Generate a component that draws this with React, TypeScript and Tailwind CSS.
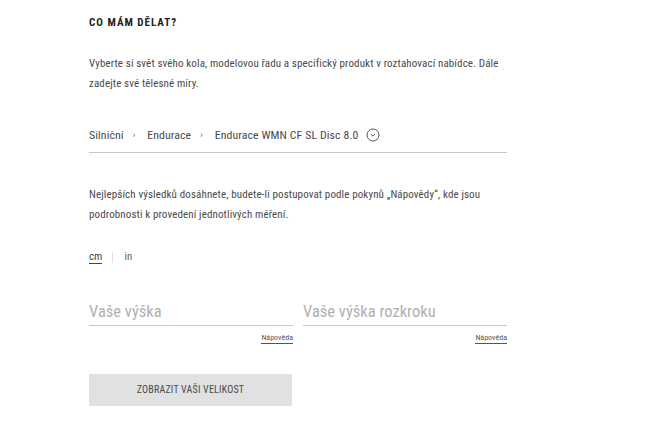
import React from "react";

const font = { fontFamily: '"Roboto Condensed", "Liberation Sans Narrow", "DejaVu Sans Condensed", sans-serif' };

export default function App() {
  return (
    <div className="w-[650px] h-[426px] bg-white overflow-hidden" style={font}>
      <div className="w-[418px] ml-[89px] pt-[16px] text-[#4a4a4a]">
        <h2 className="text-[11px] font-bold text-[#222] tracking-[1px] leading-[14px]">CO MÁM DĚLAT?</h2>
        <p className="mt-[24px] text-[11px] tracking-[0.12px] leading-[20px]">
          Vyberte si svět svého kola, modelovou řadu a specifický produkt v roztahovací nabídce. Dále zadejte své tělesné míry.
        </p>
        <div className="mt-[33px] pb-[9px] border-b border-[#c8c8c8] flex items-center text-[11.8px] tracking-[0.1px] leading-[16px] text-[#4a4a4a]">
          <span>Silniční</span>
          <span className="ml-[9px] mr-[12px] text-[9px] text-[#666]">›</span>
          <span>Endurace</span>
          <span className="ml-[9px] mr-[12px] text-[9px] text-[#666]">›</span>
          <span>Endurace WMN CF SL Disc 8.0</span>
          <svg className="ml-[8px]" width="14" height="14" viewBox="0 0 14 14" fill="none" stroke="#555" strokeWidth="1">
            <circle cx="7" cy="7" r="6" />
            <path d="M4.8 6 L7 8.2 L9.2 6" />
          </svg>
        </div>
        <p className="mt-[32px] text-[11px] tracking-[0.12px] leading-[20px]">
          Nejlepších výsledků dosáhnete, budete-li postupovat podle pokynů „Nápovědy“, kde jsou podrobnosti k provedení jednotlivých měření.
        </p>
        <div className="mt-[24px] flex items-center text-[11px] text-[#666]">
          <span className="text-[#444] border-b border-[#444] leading-[12px]">cm</span>
          <span className="ml-[10px] mr-[11px] w-px h-[11px] bg-[#e0e0e0]" />
          <span>in</span>
        </div>
        <div className="mt-[35px] grid grid-cols-2 gap-[10px]">
          <div>
            <div className="border-b border-[#c8c8c8] pb-[2px] text-[16.5px] text-[#b0b0b0] leading-[22px]">Vaše výška</div>
            <div className="flex justify-end mt-[7px]">
              <span className="text-[8px] text-[#555] border-b border-[#555] leading-[10px]">Nápověda</span>
            </div>
          </div>
          <div>
            <div className="border-b border-[#c8c8c8] pb-[2px] text-[16.5px] text-[#b0b0b0] leading-[22px]">Vaše výška rozkroku</div>
            <div className="flex justify-end mt-[7px]">
              <span className="text-[8px] text-[#555] border-b border-[#555] leading-[10px]">Nápověda</span>
            </div>
          </div>
        </div>
        <button className="mt-[30px] w-[203px] h-[32px] bg-[#e1e1e1] text-[10px] text-[#4a4a4a] tracking-[0.2px] flex items-center justify-center">
          ZOBRAZIT VAŠI VELIKOST
        </button>
      </div>
    </div>
  );
}
